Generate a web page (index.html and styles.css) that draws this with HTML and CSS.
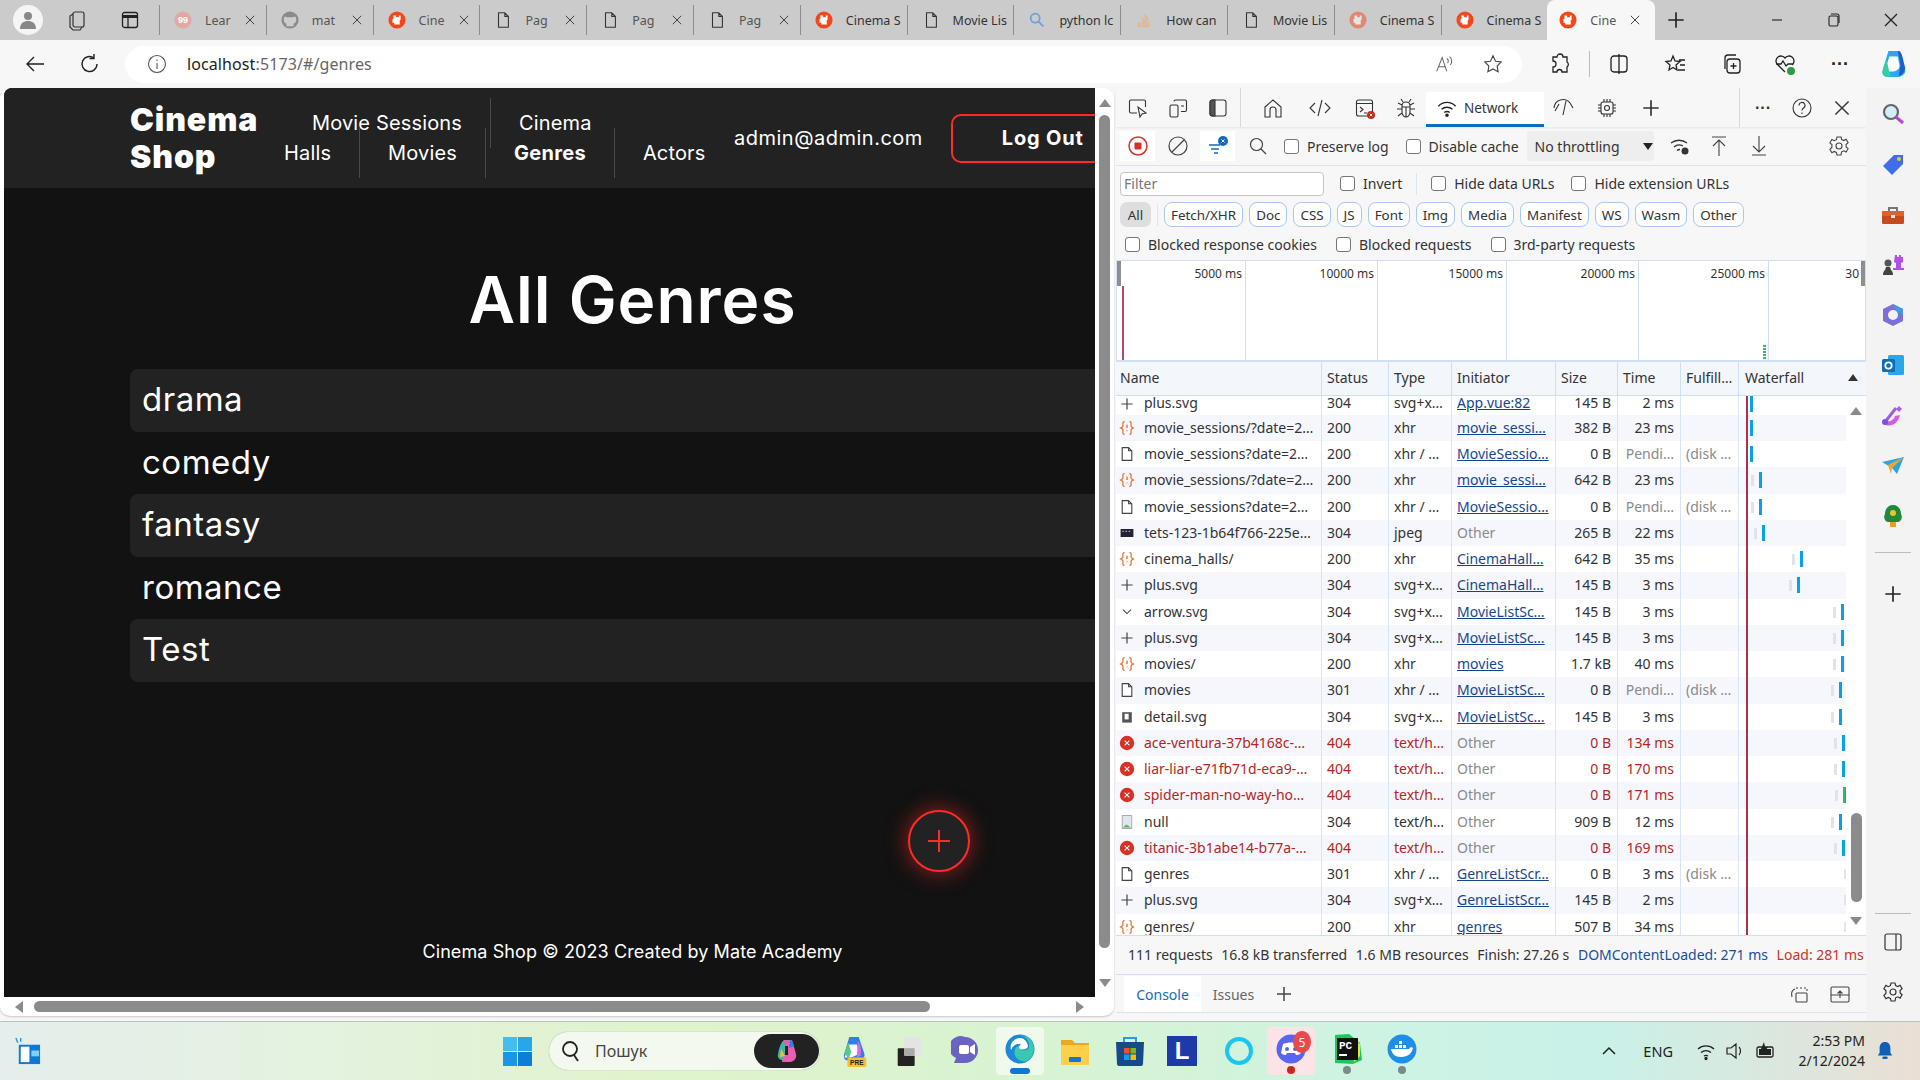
FILE: index.html
```html
<!DOCTYPE html>
<html lang="en">

<head>
  <meta charset="UTF-8" />
  <title>Cinema Shop</title>
  <link rel="stylesheet" href="styles.css">
</head>

<body>
  <svg class="sprite" xmlns="http://www.w3.org/2000/svg">
    <symbol id="i-doc" viewBox="0 0 20 20"><path d="M4 2h8l4 4v12H4z M12 2v4h4" fill="#fff" stroke="currentColor" stroke-width="1.4" stroke-linejoin="round"/></symbol>
    <symbol id="i-plus" viewBox="0 0 20 20"><path d="M10 3v14M3 10h14" fill="none" stroke="currentColor" stroke-width="1.5"/></symbol>
    <symbol id="i-xhr" viewBox="0 0 20 20"><path d="M7 2C4 2 5 5 5 7S4 9 2 10c2 1 3 1 3 3s-1 5 2 5M13 2c3 0 2 3 2 5s1 2 3 3c-2 1-3 1-3 3s1 5-2 5" fill="none" stroke="#e8743b" stroke-width="1.6"/><path d="M10 6v4M10 13v1" stroke="#e8743b" stroke-width="1.8"/></symbol>
    <symbol id="i-err" viewBox="0 0 20 20"><circle cx="10" cy="10" r="9" fill="#d93025"/><path d="M7 7l6 6M13 7l-6 6" stroke="#fff" stroke-width="1.3"/></symbol>
    <symbol id="i-close" viewBox="0 0 20 20"><path d="M4 4l12 12M16 4L4 16" fill="none" stroke="currentColor" stroke-width="1.3"/></symbol>
    <symbol id="i-page" viewBox="0 0 20 20"><path d="M5 2h7l4 4v12H5z M12 2v4h4" fill="none" stroke="currentColor" stroke-width="1.2" stroke-linejoin="round"/></symbol>
    <symbol id="i-cinema" viewBox="0 0 20 20"><circle cx="10" cy="10" r="9.5" fill="#f4471c"/><path d="M6 5h3v2h3V5h2v5h-1v5H7v-2H5V9h1z" fill="#fff"/></symbol>
  </svg>

  <div class="tabstrip">
    <div class="strip-icon profile"><svg width="24" height="24" viewBox="0 0 24 24"><circle cx="12" cy="8" r="4" fill="#888"/><path d="M4 21c0-6 4-8 8-8s8 2 8 8z" fill="#888"/></svg></div>
    <div class="strip-icon wsp"><svg width="22" height="22" viewBox="0 0 22 22" fill="none" stroke="#333" stroke-width="1.2"><rect x="7" y="3" width="11" height="15" rx="2"/><path d="M7 5L4 7v11l3 3h7l2-3"/></svg></div>
    <div class="strip-icon vert"><svg width="20" height="20" viewBox="0 0 20 20" fill="none" stroke="#222" stroke-width="1.3"><rect x="2.5" y="2.5" width="15" height="15" rx="2"/><path d="M2.5 6.5h15" stroke-width="3"/><path d="M8 7v10" /></svg></div>

    <div class="tab"><svg class="fav" viewBox="0 0 20 20"><circle cx="10" cy="10" r="9.5" fill="#e0a9a3"/><text x="10" y="13.5" class="fav-num">99</text></svg><span class="tab-title short">Lear</span><svg class="tab-x"><use href="#i-close"/></svg></div>
    <div class="tab"><svg class="fav" viewBox="0 0 20 20"><circle cx="10" cy="10" r="9.5" fill="#8a8a8a"/><path d="M6 17v-3c-2 0-3-2-3-5l1-3 3 1h6l3-1 1 3c0 3-1 5-3 5v3z" fill="#ccc"/></svg><span class="tab-title short">mat</span><svg class="tab-x"><use href="#i-close"/></svg></div>
    <div class="tab"><svg class="fav"><use href="#i-cinema"/></svg><span class="tab-title short">Cine</span><svg class="tab-x"><use href="#i-close"/></svg></div>
    <div class="tab"><svg class="fav"><use href="#i-page"/></svg><span class="tab-title short">Pag</span><svg class="tab-x"><use href="#i-close"/></svg></div>
    <div class="tab"><svg class="fav"><use href="#i-page"/></svg><span class="tab-title short">Pag</span><svg class="tab-x"><use href="#i-close"/></svg></div>
    <div class="tab"><svg class="fav"><use href="#i-page"/></svg><span class="tab-title short">Pag</span><svg class="tab-x"><use href="#i-close"/></svg></div>
    <div class="tab"><svg class="fav"><use href="#i-cinema"/></svg><span class="tab-title">Cinema S</span></div>
    <div class="tab"><svg class="fav"><use href="#i-page"/></svg><span class="tab-title">Movie Lis</span></div>
    <div class="tab"><svg class="fav" viewBox="0 0 20 20" fill="none" stroke="#6aa0dd" stroke-width="2"><circle cx="8" cy="8" r="5"/><path d="M12 12l5 5"/></svg><span class="tab-title">python lc</span></div>
    <div class="tab"><svg class="fav" viewBox="0 0 20 20" fill="none" stroke="#e3b48a" stroke-width="1.6"><path d="M4 12v5h11v-5M6.5 14.5h6M7 11.5l6 1M8 8l5.5 3M10.5 4.5l4 5"/></svg><span class="tab-title">How can</span></div>
    <div class="tab"><svg class="fav"><use href="#i-page"/></svg><span class="tab-title">Movie Lis</span></div>
    <div class="tab faded"><svg class="fav"><use href="#i-cinema"/></svg><span class="tab-title">Cinema S</span></div>
    <div class="tab"><svg class="fav"><use href="#i-cinema"/></svg><span class="tab-title">Cinema S</span></div>
    <div class="tab active"><svg class="fav"><use href="#i-cinema"/></svg><span class="tab-title short">Cine</span><svg class="tab-x"><use href="#i-close"/></svg></div>
    <svg class="new-tab"><use href="#i-plus"/></svg>

    <div class="win-btns">
      <svg class="win-btn" viewBox="0 0 20 20"><path d="M5 10h10" stroke="#222" stroke-width="1.1"/></svg>
      <svg class="win-btn" viewBox="0 0 20 20" fill="none" stroke="#222" stroke-width="1.1"><rect x="5" y="6" width="9" height="10" rx="1.5"/><path d="M7 4h6a2 2 0 0 1 2 2v7"/></svg>
      <svg class="win-btn"><use href="#i-close"/></svg>
    </div>
  </div>

  <div class="toolbar">
    <svg class="tb-icon back" viewBox="0 0 24 24" fill="none" stroke="#222" stroke-width="1.4"><path d="M21 12H4M11 5l-7 7 7 7"/></svg>
    <svg class="tb-icon reload" viewBox="0 0 24 24" fill="none" stroke="#222" stroke-width="1.4"><path d="M19 12a7.5 7.5 0 1 1-3-6M16 2v4.5h-4.5"/></svg>
    <div class="addressbar">
      <svg class="info" viewBox="0 0 20 20" fill="none" stroke="#555" stroke-width="1.1"><circle cx="10" cy="10" r="8.5"/><path d="M10 9v6M10 5.5V7"/></svg>
      <span class="url"><b>localhost</b>:5173/#/genres</span>
      <span class="url-spacer"></span>
      <svg class="bar-icon read" viewBox="0 0 24 24" fill="none" stroke="#666" stroke-width="1.1"><path d="M4 20L10 5l5 15M6 15h8M15 6c2 1 2 3 1 5M18 4c3 2 3 6 1 9"/></svg>
      <svg class="bar-icon star" viewBox="0 0 24 24" fill="none" stroke="#444" stroke-width="1.2"><path d="M12 3l2.8 6 6.2.8-4.5 4.4 1.1 6.3L12 17.4l-5.600 3.100 1.100-6.300L3 9.800 9.200 9z"/></svg>
    </div>
    <svg class="tb-icon ext" viewBox="0 0 24 24" fill="none" stroke="#222" stroke-width="1.3"><path d="M9 5a3 3 0 0 1 6 0h4v5a3 3 0 0 1 0 5v5h-5a2.5 2.5 0 0 0-5 0H5v-5a3 3 0 0 0 0-6V5z"/></svg>
    <span class="tb-sep"></span>
    <svg class="tb-icon split" viewBox="0 0 24 24" fill="none" stroke="#222" stroke-width="1.3"><rect x="4" y="4" width="16" height="16" rx="3"/><path d="M12 2v20"/></svg>
    <svg class="tb-icon favs" viewBox="0 0 24 24" fill="none" stroke="#222" stroke-width="1.3"><path d="M10 4l2 5 5 .5-4 3.5 1 5-4-2.5L6 18l1-5-4-3.5L8 9zM16 8h6M17 13h5M15 18h7"/></svg>
    <svg class="tb-icon coll" viewBox="0 0 24 24" fill="none" stroke="#222" stroke-width="1.3"><rect x="8" y="7" width="13" height="14" rx="3"/><path d="M6 17V6a3 3 0 0 1 3-3h8M14.5 11v6M11.5 14h6"/></svg>
    <svg class="tb-icon health" viewBox="0 0 24 24" fill="none" stroke="#222" stroke-width="1.3"><path d="M12 20L4 12a5 5 0 0 1 8-6 5 5 0 0 1 8 6l-1 1M3 12h5l2-3 3 5 2-2h5"/><circle cx="18" cy="19" r="4" fill="#2e9b46" stroke="none"/></svg>
    <span class="dots tb-dots">···</span>
    <svg class="tb-icon copilot" viewBox="0 0 28 32"><path d="M8 2h12l6 20c1 4-3 8-8 8H7C3 30 0 26 2 22z" fill="#2aa8e8"/><path d="M9 8h9l2 10c0 3-3 6-7 6H4z" fill="#fff"/><path d="M18 2c3 0 4 2 5 6l3 12c0 4-3 8-7 9l2-12z" fill="#1d5fd0"/><path d="M6 12c-3 5-5 12-3 16 2 2 5 2 8 1-3-5-3-11-5-17z" fill="#35cfa2"/></svg>
  </div>

  <div class="workspace">
    <div class="browser-card">
      <div class="viewport">
        <div class="site">
          <header class="site-header">
            <a class="logo">Cinema<br>Shop</a>
            <nav class="site-nav"><a class="first">Movie Sessions</a><a>Cinema<br>Halls</a><a>Movies</a><a class="current">Genres</a><a>Actors</a></nav>
            <span class="user">admin@admin.com</span>
            <button class="logout">Log Out</button>
          </header>
          <main class="genres">
            <h1>All Genres</h1>
            <ul class="genre-list">
              <li>drama</li>
              <li>comedy</li>
              <li>fantasy</li>
              <li>romance</li>
              <li>Test</li>
            </ul>
          </main>
          <footer class="site-footer">Cinema Shop © 2023 Created by Mate Academy</footer>
          <button class="add-btn"><svg width="24" height="24" viewBox="0 0 24 24"><path d="M12 1v22M1 12h22" stroke="#ff2a2a" stroke-width="2"/></svg></button>
        </div>
        <div class="page-vscroll">
          <span class="arrow-up"></span>
          <span class="page-vthumb"></span>
          <span class="arrow-down"></span>
        </div>
      </div>
      <div class="page-hscroll">
        <span class="arrow-left"></span>
        <span class="page-hthumb"></span>
        <span class="arrow-right"></span>
      </div>
    </div>

    <section class="devtools">
      <div class="dt-tabs">
        <svg class="dt-icon" viewBox="0 0 22 22" fill="none" stroke="#333" stroke-width="1.1"><path d="M10 16H4a1.5 1.5 0 0 1-1.5-1.5v-10A1.5 1.5 0 0 1 4 3h13a1.5 1.5 0 0 1 1.5 1.5V10"/><path d="M11 10l2 10 2-3 4-1z"/></svg>
        <svg class="dt-icon" viewBox="0 0 22 22" fill="none" stroke="#333" stroke-width="1.1"><rect x="3" y="8" width="8" height="12" rx="1.5"/><path d="M7 4.5A1.5 1.5 0 0 1 8.5 3H18a1.5 1.5 0 0 1 1.5 1.5V13a1.5 1.5 0 0 1-1.5 1.5h-4M14 9h3"/></svg>
        <svg class="dt-icon sep-after" viewBox="0 0 22 22" fill="none" stroke="#333" stroke-width="1.1"><rect x="3" y="3" width="16" height="16" rx="2.5"/><path d="M3 5.5A2.5 2.5 0 0 1 5.5 3H8v16H5.5A2.5 2.5 0 0 1 3 16.5z" fill="#555"/></svg>
        <span class="dt-vsep left-sep"></span>
        <svg class="dt-icon wide first-wide" viewBox="0 0 22 22" fill="none" stroke="#333" stroke-width="1.1"><path d="M3 10l8-7 8 7v10h-5v-7a3 3 0 0 0-6 0v7H3z"/></svg>
        <svg class="dt-icon wide" viewBox="0 0 22 22" fill="none" stroke="#333" stroke-width="1.1"><path d="M6 6l-5 5 5 5M16 6l5 5-5 5M13 3l-4 16"/></svg>
        <svg class="dt-icon mid" viewBox="0 0 22 22" fill="none" stroke="#333" stroke-width="1.1"><rect x="2.5" y="3" width="16" height="16" rx="2"/><path d="M2.5 6.5h16M6 10l3 2.5L6 15M10 16h3"/><circle cx="17" cy="18" r="4" fill="#c42b1c" stroke="none"/><path d="M15.8 16.8l2.4 2.4M18.2 16.8l-2.4 2.4" stroke="#fff" stroke-width=".9"/></svg>
        <svg class="dt-icon" viewBox="0 0 22 22" fill="none" stroke="#333" stroke-width="1.1"><path d="M7 9c0-3 2-4 4-4s4 1 4 4v6c0 3-2 5-4 5s-4-2-4-5zM7 10h8M11 10v10M8 5L6 2M14 5l2-3M7 12H2M15 12h5M7 8L3 6M15 8l4-2M7 16l-4 3M15 16l4 3"/></svg>
        <div class="dt-tab-active">
          <svg width="20" height="20" viewBox="0 0 22 22" fill="none" stroke="#222" stroke-width="1.5"><path d="M1.5 9a13 13 0 0 1 19 0M5 12.5a9 9 0 0 1 12 0M8 16a5 5 0 0 1 6 0"/><circle cx="11" cy="19" r="1.2" fill="#222"/></svg>
          <span>Network</span>
        </div>
        <svg class="dt-icon after-tab" viewBox="0 0 22 22" fill="none" stroke="#333" stroke-width="1.1"><path d="M2 11a9 9 0 0 1 16-5l3 5M11 18l3-14M7 7l-4 7"/></svg>
        <svg class="dt-icon gap4" viewBox="0 0 22 22" fill="none" stroke="#333" stroke-width="1.1"><rect x="5" y="5" width="12" height="12" rx="2"/><circle cx="11" cy="11" r="2.5"/><path d="M8 2v3M11 2v3M14 2v3M8 17v3M11 17v3M14 17v3M2 8h3M2 11h3M2 14h3M17 8h3M17 11h3M17 14h3"/></svg>
        <svg class="dt-icon gap4"><use href="#i-plus"/></svg>
        <span class="dt-spacer"></span>
        <span class="dt-vsep right-sep"></span>
        <span class="dots dt-dots">···</span>
        <svg class="dt-icon" viewBox="0 0 22 22" fill="none" stroke="#333" stroke-width="1.1"><circle cx="11" cy="11" r="9"/><path d="M8 8.5a3 3 0 1 1 4.5 2.5c-1 .6-1.5 1-1.5 2.5M11 15.5V17"/></svg>
        <svg class="dt-icon"><use href="#i-close"/></svg>
      </div>

      <div class="dt-controls">
        <span class="ctl-btn lit"><svg width="22" height="22" viewBox="0 0 22 22"><circle cx="11" cy="11" r="9" fill="none" stroke="#d93025" stroke-width="1.5"/><rect x="7.5" y="7.5" width="7" height="7" rx="1" fill="#d93025"/></svg></span>
        <span class="ctl-btn gap6"><svg width="22" height="22" viewBox="0 0 22 22" fill="none" stroke="#444" stroke-width="1.2"><circle cx="11" cy="11" r="9"/><path d="M5 17L17 5"/></svg></span>
        <span class="ctl-btn lit gap6"><svg width="24" height="24" viewBox="0 0 24 24"><path d="M3 11h11M5 15h8M8 19h4" stroke="#0f6cbd" stroke-width="1.5"/><circle cx="17" cy="7" r="5" fill="#0f6cbd"/><path d="M15.5 5.5l3 3M18.5 5.5l-3 3" stroke="#fff" stroke-width="1"/></svg></span>
        <span class="ctl-btn gap6"><svg width="20" height="20" viewBox="0 0 20 20" fill="none" stroke="#444" stroke-width="1.2"><circle cx="8.5" cy="8.5" r="6"/><path d="M13 13l5 5"/></svg></span>
        <label class="check first-check"><input type="checkbox">Preserve log</label>
        <label class="check"><input type="checkbox">Disable cache</label>
        <span class="throttle">No throttling<i class="tri"></i></span>
        <svg class="ctl-icon wifi-gear" viewBox="0 0 22 22" fill="none" stroke="#333" stroke-width="1.3"><path d="M2 8a13 13 0 0 1 16 0M5 12a8 8 0 0 1 9-1M8 15.5a4 4 0 0 1 3-1"/><circle cx="16" cy="16" r="3.5" fill="#333" stroke="none"/></svg>
        <svg class="ctl-icon up" viewBox="0 0 22 22" fill="none" stroke="#444" stroke-width="1.1"><path d="M4 2h14M11 21V5M5 11l6-6 6 6"/></svg>
        <svg class="ctl-icon down" viewBox="0 0 22 22" fill="none" stroke="#444" stroke-width="1.1"><path d="M4 20h14M11 1v16M5 11l6 6 6-6"/></svg>
        <svg class="ctl-icon gear" viewBox="0 0 22 22" fill="none" stroke="#444" stroke-width="1.1"><path d="M9 2h4l.6 2.6 2.2 1 2.3-1.300 2 3.400-2 1.800v2.400l2 1.800-2 3.400-2.300-1.300-2.200 1L13 20H9l-.6-2.600-2.200-1-2.300 1.300-2-3.400 2-1.800V9.600l-2-1.800 2-3.400 2.300 1.300 2.200-1z"/><circle cx="11" cy="11" r="3"/></svg>
      </div>

      <div class="dt-filter">
        <input class="filter-input" placeholder="Filter">
        <label class="check invert"><input type="checkbox">Invert</label>
        <span class="filter-sep"></span>
        <label class="check"><input type="checkbox">Hide data URLs</label>
        <label class="check"><input type="checkbox">Hide extension URLs</label>
      </div>

      <div class="dt-types">
        <span class="all-type">All</span>
        <span class="types-sep"></span>
        <span class="type">Fetch/XHR</span><span class="type">Doc</span><span class="type">CSS</span><span class="type">JS</span><span class="type">Font</span><span class="type">Img</span><span class="type">Media</span><span class="type">Manifest</span><span class="type">WS</span><span class="type">Wasm</span><span class="type">Other</span>
      </div>

      <div class="dt-blocked">
        <label class="check"><input type="checkbox">Blocked response cookies</label>
        <label class="check"><input type="checkbox">Blocked requests</label>
        <label class="check"><input type="checkbox">3rd-party requests</label>
      </div>

      <div class="overview">
        <span class="tick w129">5000 ms</span>
        <span class="tick w132">10000 ms</span>
        <span class="tick w129">15000 ms</span>
        <span class="tick w132">20000 ms</span>
        <span class="tick w130">25000 ms</span>
        <span class="tick rest">30</span>
        <i class="handle left"></i>
        <i class="handle right"></i>
        <i class="ov-load"></i>
        <i class="ov-dots"></i>
      </div>

      <div class="net-head">
        <span>Name</span><span>Status</span><span>Type</span><span>Initiator</span><span>Size</span><span>Time</span><span>Fulfill…</span><span class="wf-head">Waterfall<i class="sort-tri"></i></span>
      </div>

      <div class="net-body">
        <div class="rows">
          <div class="row"><span class="name"><svg class="ri"><use href="#i-plus"/></svg>plus.svg</span><span>304</span><span>svg+x…</span><span class="link">App.vue:82</span><span class="num">145 B</span><span class="num">2 ms</span><span></span><span class="wf"><i class="bar" style="margin-left:11px"></i></span></div>
          <div class="row"><span class="name"><svg class="ri"><use href="#i-xhr"/></svg>movie_sessions/?date=2…</span><span>200</span><span>xhr</span><span class="link">movie_sessi…</span><span class="num">382 B</span><span class="num">23 ms</span><span></span><span class="wf"><i class="bar" style="margin-left:11px"></i></span></div>
          <div class="row"><span class="name"><svg class="ri"><use href="#i-doc"/></svg>movie_sessions?date=2…</span><span>200</span><span>xhr / …</span><span class="link">MovieSessio…</span><span class="num">0 B</span><span class="num dim">Pendi…</span><span class="dim">(disk …</span><span class="wf"><i class="bar" style="margin-left:11px"></i></span></div>
          <div class="row"><span class="name"><svg class="ri"><use href="#i-xhr"/></svg>movie_sessions/?date=2…</span><span>200</span><span>xhr</span><span class="link">movie_sessi…</span><span class="num">642 B</span><span class="num">23 ms</span><span></span><span class="wf"><i class="bar" style="margin-left:20px"></i></span></div>
          <div class="row"><span class="name"><svg class="ri"><use href="#i-doc"/></svg>movie_sessions?date=2…</span><span>200</span><span>xhr / …</span><span class="link">MovieSessio…</span><span class="num">0 B</span><span class="num dim">Pendi…</span><span class="dim">(disk …</span><span class="wf"><i class="bar" style="margin-left:20px"></i></span></div>
          <div class="row"><span class="name"><svg class="ri" viewBox="0 0 20 20"><rect x="2" y="5" width="16" height="10" fill="#223"/><path d="M4 8h2M8 8h2M12 8h2" stroke="#8ad" stroke-width="1.5"/></svg>tets-123-1b64f766-225e…</span><span>304</span><span>jpeg</span><span class="dim">Other</span><span class="num">265 B</span><span class="num">22 ms</span><span></span><span class="wf"><i class="bar" style="margin-left:23px"></i></span></div>
          <div class="row"><span class="name"><svg class="ri"><use href="#i-xhr"/></svg>cinema_halls/</span><span>200</span><span>xhr</span><span class="link">CinemaHall…</span><span class="num">642 B</span><span class="num">35 ms</span><span></span><span class="wf"><i class="bar" style="margin-left:61px"></i></span></div>
          <div class="row"><span class="name"><svg class="ri"><use href="#i-plus"/></svg>plus.svg</span><span>304</span><span>svg+x…</span><span class="link">CinemaHall…</span><span class="num">145 B</span><span class="num">3 ms</span><span></span><span class="wf"><i class="bar" style="margin-left:58px"></i></span></div>
          <div class="row"><span class="name"><svg class="ri" viewBox="0 0 20 20"><path d="M5 7l5 5 5-5" fill="none" stroke="currentColor" stroke-width="1.3"/></svg>arrow.svg</span><span>304</span><span>svg+x…</span><span class="link">MovieListSc…</span><span class="num">145 B</span><span class="num">3 ms</span><span></span><span class="wf"><i class="bar" style="margin-left:102px"></i></span></div>
          <div class="row"><span class="name"><svg class="ri"><use href="#i-plus"/></svg>plus.svg</span><span>304</span><span>svg+x…</span><span class="link">MovieListSc…</span><span class="num">145 B</span><span class="num">3 ms</span><span></span><span class="wf"><i class="bar" style="margin-left:102px"></i></span></div>
          <div class="row"><span class="name"><svg class="ri"><use href="#i-xhr"/></svg>movies/</span><span>200</span><span>xhr</span><span class="link">movies</span><span class="num">1.7 kB</span><span class="num">40 ms</span><span></span><span class="wf"><i class="bar" style="margin-left:102px"></i></span></div>
          <div class="row"><span class="name"><svg class="ri"><use href="#i-doc"/></svg>movies</span><span>301</span><span>xhr / …</span><span class="link">MovieListSc…</span><span class="num">0 B</span><span class="num dim">Pendi…</span><span class="dim">(disk …</span><span class="wf"><i class="bar" style="margin-left:100px"></i></span></div>
          <div class="row"><span class="name"><svg class="ri" viewBox="0 0 20 20"><rect x="4" y="4" width="12" height="13" fill="#555"/><rect x="7" y="6" width="5" height="7" fill="#fff"/></svg>detail.svg</span><span>304</span><span>svg+x…</span><span class="link">MovieListSc…</span><span class="num">145 B</span><span class="num">3 ms</span><span></span><span class="wf"><i class="bar" style="margin-left:100px"></i></span></div>
          <div class="row bad"><span class="name"><svg class="ri"><use href="#i-err"/></svg>ace-ventura-37b4168c-…</span><span>404</span><span>text/h…</span><span class="dim">Other</span><span class="num">0 B</span><span class="num">134 ms</span><span></span><span class="wf"><i class="bar" style="margin-left:103px"></i></span></div>
          <div class="row bad"><span class="name"><svg class="ri"><use href="#i-err"/></svg>liar-liar-e71fb71d-eca9-…</span><span>404</span><span>text/h…</span><span class="dim">Other</span><span class="num">0 B</span><span class="num">170 ms</span><span></span><span class="wf"><i class="bar" style="margin-left:103px"></i></span></div>
          <div class="row bad"><span class="name"><svg class="ri"><use href="#i-err"/></svg>spider-man-no-way-ho…</span><span>404</span><span>text/h…</span><span class="dim">Other</span><span class="num">0 B</span><span class="num">171 ms</span><span></span><span class="wf"><i class="bar green" style="margin-left:104px"></i></span></div>
          <div class="row"><span class="name"><svg class="ri" viewBox="0 0 20 20"><rect x="4" y="2" width="12" height="16" fill="#dfe6ee" stroke="#99a" stroke-width="1"/><path d="M5 17l4-4 6 4z" fill="#5bb35b"/></svg>null</span><span>304</span><span>text/h…</span><span class="dim">Other</span><span class="num">909 B</span><span class="num">12 ms</span><span></span><span class="wf"><i class="bar" style="margin-left:100px"></i></span></div>
          <div class="row bad"><span class="name"><svg class="ri"><use href="#i-err"/></svg>titanic-3b1abe14-b77a-…</span><span>404</span><span>text/h…</span><span class="dim">Other</span><span class="num">0 B</span><span class="num">169 ms</span><span></span><span class="wf"><i class="bar" style="margin-left:103px"></i></span></div>
          <div class="row"><span class="name"><svg class="ri"><use href="#i-doc"/></svg>genres</span><span>301</span><span>xhr / …</span><span class="link">GenreListScr…</span><span class="num">0 B</span><span class="num">3 ms</span><span class="dim">(disk …</span><span class="wf"><i class="bar pale" style="margin-left:105px"></i></span></div>
          <div class="row"><span class="name"><svg class="ri"><use href="#i-plus"/></svg>plus.svg</span><span>304</span><span>svg+x…</span><span class="link">GenreListScr…</span><span class="num">145 B</span><span class="num">2 ms</span><span></span><span class="wf"><i class="bar pale" style="margin-left:105px"></i></span></div>
          <div class="row"><span class="name"><svg class="ri"><use href="#i-xhr"/></svg>genres/</span><span>200</span><span>xhr</span><span class="link">genres</span><span class="num">507 B</span><span class="num">34 ms</span><span></span><span class="wf"><i class="bar pale" style="margin-left:105px"></i></span></div>
        </div>
        <div class="net-scroll">
          <span class="arrow-up top-arrow"></span>
          <span class="net-thumb"></span>
          <span class="arrow-down"></span>
        </div>
        <i class="load-line"></i>
      </div>

      <div class="net-status">
        <span>111 requests</span><span>16.8 kB transferred</span><span>1.6 MB resources</span><span>Finish: 27.26 s</span><span class="dcl">DOMContentLoaded: 271 ms</span><span class="load">Load: 281 ms</span>
      </div>

      <div class="drawer">
        <span class="drawer-tab on">Console</span>
        <span class="drawer-tab">Issues</span>
        <svg class="drawer-plus"><use href="#i-plus"/></svg>
        <span class="dt-spacer"></span>
        <svg class="drawer-icon" viewBox="0 0 22 22" fill="none" stroke="#444" stroke-width="1.1"><rect x="8" y="10" width="11" height="9" rx="1"/><path d="M8 5h11v3" stroke-dasharray="2 2"/><path d="M7 6C4 7 3 10 4 14"/></svg>
        <svg class="drawer-icon last" viewBox="0 0 22 22" fill="none" stroke="#444" stroke-width="1.1"><rect x="2" y="4" width="18" height="15" rx="1.5"/><path d="M2 12h18M11 15V8M8.5 10.5L11 8l2.5 2.5"/></svg>
      </div>
    </section>

    <aside class="sidebar">
      <svg class="side-icon" viewBox="0 0 24 24"><circle cx="10" cy="10" r="7" fill="#d5ecfa" stroke="#666" stroke-width="2.2"/><path d="M15 15l7 6" stroke="#c03fe0" stroke-width="3"/></svg>
      <svg class="side-icon" viewBox="0 0 24 24"><path d="M2 14L13 3h9v9L11 23z" fill="#3f6fe8"/><circle cx="18" cy="7" r="2" fill="#f4c430"/></svg>
      <svg class="side-icon" viewBox="0 0 24 24"><path d="M8 8V5h8v3" fill="none" stroke="#777" stroke-width="2"/><rect x="1" y="8" width="22" height="13" rx="1.5" fill="#c8491e"/><rect x="1" y="8" width="22" height="5" fill="#e0622b"/><rect x="10" y="12" width="4" height="3" fill="#eee"/></svg>
      <svg class="side-icon" viewBox="0 0 24 24"><circle cx="7" cy="10" r="3.5" fill="#555"/><path d="M2 22c0-3 1-4 2-5l1-3h4l1 3c1 1 2 2 2 5z" fill="#444"/><path d="M14 2h2v2h2V2h2v2h2V2v7l-2 1v5h3v2h-11v-2h3v-5l-2-1z" fill="#b24fe8"/></svg>
      <svg class="side-icon" viewBox="0 0 24 24"><path d="M12 1l10 5v12l-10 5-10-5V6z" fill="#7b6fd8"/><path d="M12 1l10 5v6l-6-3z" fill="#3f9be8"/><path d="M7 12a5 5 0 1 0 10 0 5 5 0 0 0-10 0z" fill="#f4f4f4"/></svg>
      <svg class="side-icon" viewBox="0 0 24 24"><rect x="7" y="2" width="16" height="20" rx="1.5" fill="#28a8ea"/><rect x="1" y="6" width="13" height="13" rx="1.5" fill="#0f6cbd"/><circle cx="7.5" cy="12.5" r="3.2" fill="none" stroke="#fff" stroke-width="1.8"/></svg>
      <svg class="side-icon" viewBox="0 0 24 24"><path d="M3 20c6 4 14 0 16-9l-5 1c-1 4-5 6-8 5z" fill="#d05ce8"/><path d="M4 18L15 4" stroke="#9b5de8" stroke-width="3"/><circle cx="4" cy="18" r="3" fill="#7b4fe8"/><path d="M18 2l3 3-3 3-3-3z" fill="#b05ce8"/></svg>
      <svg class="side-icon" viewBox="0 0 24 24"><path d="M1 8l22-5-7 17-5-6z" fill="#2ca5e0"/><path d="M7 11l16-8-12 11-1 6z" fill="#f2a623"/></svg>
      <svg class="side-icon" viewBox="0 0 24 24"><rect x="9" y="16" width="6" height="7" fill="#e3a21a"/><path d="M12 1c5 0 8 4 8 9 2 3 0 8-3 8H7c-3 0-5-5-3-8 0-5 3-9 8-9z" fill="#1f8a3c"/><circle cx="12" cy="9" r="3" fill="#f2c12e"/></svg>
      <span class="side-sep"></span>
      <svg class="side-plus"><use href="#i-plus"/></svg>
      <span class="dt-spacer"></span>
      <span class="side-sep low"></span>
      <svg class="side-tool" viewBox="0 0 22 22" fill="none" stroke="#333" stroke-width="1.2"><rect x="3" y="3" width="16" height="16" rx="2"/><path d="M14 3v16"/></svg>
      <svg class="side-tool gear-tool" viewBox="0 0 22 22" fill="none" stroke="#333" stroke-width="1.2"><path d="M9 2h4l.6 2.6 2.2 1 2.3-1.300 2 3.400-2 1.800v2.400l2 1.800-2 3.400-2.300-1.300-2.200 1L13 20H9l-.6-2.600-2.200-1-2.300 1.300-2-3.400 2-1.800V9.600l-2-1.800 2-3.400 2.300 1.300 2.200-1z"/><circle cx="11" cy="11" r="3"/></svg>
    </aside>
  </div>

  <footer class="taskbar">
    <svg class="widgets" viewBox="0 0 30 30"><path d="M3 1l2 5M8 1v4" stroke="#2b9be0" stroke-width="1.5"/><rect x="6" y="8" width="22" height="20" fill="#0f78d4"/><rect x="8" y="10" width="9" height="16" fill="#fff"/><rect x="19" y="14" width="8" height="6" fill="#7fd0f7"/></svg>
    <svg class="start" viewBox="0 0 30 30"><rect x="0" y="0" width="14.5" height="14.5" fill="#44bdf2"/><rect x="15.5" y="0" width="14.5" height="14.5" fill="#2ba5ea"/><rect x="0" y="15.5" width="14.5" height="14.5" fill="#1b96e6"/><rect x="15.5" y="15.5" width="14.5" height="14.5" fill="#0b7fd8"/></svg>
    <div class="search-pill">
      <svg width="22" height="24" viewBox="0 0 22 24" fill="none" stroke="#222" stroke-width="1.8"><circle cx="10" cy="10" r="7"/><path d="M14 16l4 6"/></svg>
      <span class="search-text">Пошук</span>
      <span class="search-copilot"><svg width="22" height="26" viewBox="0 0 22 26"><path d="M8 2h8l4 14c1 4-2 8-6 8H6z" fill="#e85fb0"/><path d="M8 2c-3 2-5 8-6 14-1 4 2 6 5 6l3-10z" fill="#3fb5a8"/><path d="M14 2c2 0 3 2 4 6l-5 2z" fill="#2f7fe8"/><rect x="9" y="8" width="3" height="9" fill="#222"/><path d="M5 11l4 7-5 1z" fill="#f2c12e"/></svg></span>
    </div>
    <svg class="app pre-app" viewBox="0 0 30 34"><path d="M10 2h10l6 18c1 4-2 7-6 7H9C5 27 3 23 5 19z" fill="#2f7fe8"/><path d="M10 10h8l3 10-9 4H5z" fill="#fff"/><path d="M5 18l4-10 3 10-3 8z" fill="#55c88a"/><path d="M19 6c3 3 4 10 3 16l-4 2z" fill="#d96be0"/><rect x="8" y="24" width="20" height="10" rx="1.5" fill="#f2c12e"/><text x="18" y="32" class="pre">PRE</text></svg>
    <svg class="app" viewBox="0 0 30 34"><rect x="3" y="14" width="18" height="19" rx="1" fill="#222"/><rect x="10" y="2" width="18" height="20" rx="1" fill="#e4e4e4"/><rect x="10" y="14" width="11" height="8" fill="#aaa"/></svg>
    <svg class="app video" viewBox="0 0 30 30"><path d="M14 1a11 11 0 0 1 0 26H3l2-5A11 11 0 0 1 14 1z" fill="#6b63c4"/><rect x="8" y="9" width="10" height="9" rx="2" fill="#fff"/><path d="M19 11l5-3v11l-5-3z" fill="#fff"/></svg>
    <div class="app-slot on"><svg class="app" viewBox="0 0 30 30"><circle cx="15" cy="15" r="14.5" fill="#1d87d8"/><path d="M29 15C29 7 23 1 15 1 20 2 25 7 24 13c-.5 3-4 4-7 3.5-3-.8-2-4 0-5-6-1-9 5-7 10 2 5 8 7.5 13 5 4-2.3 6-7 6-12z" fill="#36c9b0"/><path d="M6 16c2-5 6-7 10-5.5-2 1-3 4 0 5 3 .5 6.5-.5 7-3.500-1-5-4-8-8-8-6 0-11 6-9 12z" fill="#fff"/></svg><i class="pip blue"></i></div>
    <svg class="app folder" viewBox="0 0 30 30"><path d="M1 4h11l3 3h14v20H1z" fill="#e8a91c"/><rect x="1" y="9" width="28" height="20" fill="#fbd14b"/><rect x="9" y="21" width="12" height="5" rx="1" fill="#0f78d4"/></svg>
    <svg class="app" viewBox="0 0 30 30"><path d="M9 6V2h12v4" fill="none" stroke="#2b9be0" stroke-width="2"/><path d="M1 6h28l-1 22a2 2 0 0 1-2 2H4a2 2 0 0 1-2-2z" fill="#154b88"/><rect x="9" y="12" width="5.5" height="5.5" fill="#f25022"/><rect x="15.5" y="12" width="5.5" height="5.5" fill="#7fba00"/><rect x="9" y="18.5" width="5.5" height="5.5" fill="#00a4ef"/><rect x="15.5" y="18.5" width="5.5" height="5.5" fill="#ffb900"/></svg>
    <span class="app-l">L</span>
    <svg class="app ring" viewBox="0 0 30 30"><circle cx="15" cy="15" r="12" fill="none" stroke="#1ac6f0" stroke-width="4"/></svg>
    <div class="app-slot pink"><svg class="app" viewBox="0 0 30 30"><circle cx="15" cy="15" r="14.5" fill="#5865f2"/><path d="M7 10c5-2 11-2 16 0l2 9c-2 2-4 2-5 2l-1-2H11l-1 2c-1 0-3 0-5-2z" fill="#fff"/><circle cx="11" cy="15" r="2" fill="#5865f2"/><circle cx="19" cy="15" r="2" fill="#5865f2"/></svg><i class="badge">5</i><i class="pip red"></i></div>
    <div class="app-slot plain"><svg class="app" viewBox="0 0 30 30"><path d="M3 1l14-1 11 9 2 17-9 4-18-1z" fill="#20c55e"/><path d="M20 4l8 6v12l-6 6z" fill="#e8e33a"/><rect x="5" y="4" width="21" height="22" fill="#111"/><text x="7" y="15" class="pc">PC</text><rect x="7" y="20" width="8" height="2" fill="#fff"/></svg><i class="pip gray"></i></div>
    <div class="app-slot plain"><svg class="app" viewBox="0 0 30 30"><circle cx="15" cy="15" r="14.5" fill="#1d8fe8"/><path d="M4 15h18c1-2 3-2 4-1-1 5-5 9-12 9-6 0-9-3-10-8z" fill="#fff"/><path d="M8 11h3v3H8zM12 11h3v3h-3zM16 11h3v3h-3zM12 7h3v3h-3z" fill="#fff"/></svg><i class="pip gray"></i></div>
    <span class="dt-spacer"></span>
    <svg class="tray chev" viewBox="0 0 20 20" fill="none" stroke="#222" stroke-width="1.5"><path d="M4 13l6-6 6 6"/></svg>
    <span class="lang">ENG</span>
    <svg class="tray" viewBox="0 0 20 20" fill="none" stroke="#222" stroke-width="1.3"><path d="M2 8a12 12 0 0 1 16 0M5 11.5a8 8 0 0 1 10 0M8 15a4 4 0 0 1 4 0"/><circle cx="10" cy="17.5" r="1" fill="#222"/></svg>
    <svg class="tray" viewBox="0 0 20 20" fill="none" stroke="#222" stroke-width="1.2"><path d="M2 7h4l5-4v14l-5-4H2zM14 6c2 2 2 6 0 8"/></svg>
    <svg class="tray batt" viewBox="0 0 20 20"><rect x="1" y="6" width="16" height="10" rx="1.5" fill="none" stroke="#222" stroke-width="1.3"/><rect x="3" y="8" width="12" height="6" fill="#222"/><path d="M8 1L5 8h3l-1 5 5-7H9z" fill="#222"/></svg>
    <div class="clock"><span>2:53 PM</span><span>2/12/2024</span></div>
    <svg class="bell" viewBox="0 0 20 22"><path d="M10 1c4 0 6 3 6 7v5l2 3H2l2-3V8c0-4 2-7 6-7z" fill="#0f5fb5"/><rect x="7" y="17" width="6" height="3" rx="1.5" fill="#0f5fb5"/></svg>
  </footer>
</body>

</html>
```

FILE: styles.css
```css
* {
  box-sizing: border-box;
}

body {
  margin: 0;
  width: 1920px;
  height: 1080px;
  overflow: hidden;
  display: flex;
  flex-direction: column;
  background-color: #f7f7f7;
  color: #222;
  font-family: 'Noto Sans', sans-serif;
}

.sprite {
  width: 0;
  height: 0;
  position: absolute;
}

/* tab strip */
.tabstrip {
  height: 40px;
  flex: none;
  display: flex;
  align-items: center;
  background-color: #cbcbcb;
}

.strip-icon {
  display: flex;
  align-items: center;
  justify-content: center;
}

.profile {
  width: 30px;
  height: 30px;
  margin-left: 13px;
  background-color: #f5f5f5;
  border-radius: 50%;
}

.wsp {
  width: 24px;
  margin-left: 22px;
}

.vert {
  width: 24px;
  margin-left: 29px;
  margin-right: 17px;
}

.tab {
  width: 106.8px;
  height: 30px;
  flex: none;
  display: flex;
  align-items: center;
  padding-left: 14px;
  border-left: 1px solid #8c8c8c;
  font-size: 12.5px;
  color: #333;
  white-space: nowrap;
}

.tab.faded .fav {
  opacity: .5;
}

.tab.active {
  height: 40px;
  width: 108px;
  border: 0;
  border-radius: 8px 8px 0 0;
  background-color: #f7f7f7;
  padding-left: 12px;
}

.fav {
  width: 18px;
  height: 18px;
  flex: none;
  margin-right: 13px;
}

.fav-num {
  font-family: 'Liberation Sans', sans-serif;
  font-size: 10px;
  font-weight: bold;
  fill: #fff;
  text-anchor: middle;
}

.tab-title {
  flex: none;
}

.tab-title.short {
  width: 32px;
  color: #555;
}

.tab-x {
  width: 14px;
  height: 14px;
  flex: none;
  margin-left: 6px;
}

.new-tab {
  width: 22px;
  height: 22px;
  margin-left: 10px;
}

.win-btns {
  margin-left: auto;
  display: flex;
  gap: 37px;
  padding-right: 19px;
}

.win-btn {
  width: 20px;
  height: 20px;
}

/* address bar row */
.toolbar {
  height: 48px;
  flex: none;
  display: flex;
  align-items: center;
  padding-left: 23px;
}

.tb-icon {
  width: 24px;
  height: 24px;
  flex: none;
}

.reload {
  margin-left: 31px;
}

.addressbar {
  width: 1397px;
  height: 37px;
  margin-left: 23px;
  display: flex;
  align-items: center;
  background-color: #fff;
  border-radius: 19px;
  padding-left: 22px;
}

.info {
  width: 20px;
  height: 20px;
}

.url {
  margin-left: 20px;
  font-size: 16px;
  color: #666;
  letter-spacing: .1px;
}

.url b {
  font-weight: normal;
  color: #222;
}

.url-spacer,
.dt-spacer {
  flex: 1;
}

.bar-icon {
  width: 22px;
  height: 22px;
}

.star {
  margin-left: 27px;
  margin-right: 18px;
}

.ext {
  margin-left: 26px;
}

.tb-sep {
  width: 1px;
  height: 26px;
  margin-left: 17px;
  background-color: #bbb;
}

.split {
  margin-left: 17px;
}

.favs,
.coll {
  margin-left: 32px;
}

.health {
  margin-left: 30px;
}

.dots {
  font-family: 'Liberation Sans', sans-serif;
  font-weight: bold;
  line-height: 1;
}

.tb-dots {
  width: 24px;
  margin-left: 31px;
  text-align: center;
  font-size: 18px;
}

.copilot {
  width: 26px;
  height: 30px;
  margin-left: 29px;
}

/* main area */
.workspace {
  height: 933px;
  flex: none;
  display: flex;
}

.browser-card {
  width: 1114px;
  height: 928px;
  flex: none;
  padding-left: 4px;
  background-color: #fff;
  border-radius: 10px;
  overflow: hidden;
  box-shadow: 0 1px 2px rgba(0, 0, 0, .2);
}

.viewport {
  height: 909px;
  display: flex;
}

.site {
  width: 1091px;
  height: 909px;
  flex: none;
  position: relative;
  display: flex;
  flex-direction: column;
  background-color: #121212;
  border-top-left-radius: 8px;
  color: #fff;
  font-family: Inter, sans-serif;
  overflow: hidden;
}

.site-header {
  height: 100px;
  flex: none;
  display: flex;
  align-items: center;
  padding-left: 126px;
  background-color: #222;
}

.logo {
  width: 154px;
  flex: none;
  font-size: 32px;
  font-weight: 900;
  line-height: 37px;
  letter-spacing: .9px;
}

.site-nav {
  width: 450px;
  flex: none;
  font-size: 20px;
  line-height: 30px;
  letter-spacing: .15px;
  white-space: nowrap;
}

.site-nav a {
  padding: 13px 28px;
  border-left: 1px solid #4a4a4a;
}

.site-nav a.first {
  border-left: 0;
}

.site-nav a.current {
  font-weight: 700;
  letter-spacing: .3px;
}

.user {
  flex: none;
  font-size: 20px;
  letter-spacing: .5px;
}

.logout {
  width: 200px;
  height: 49px;
  flex: none;
  margin-left: 28px;
  padding: 0 0 0 49px;
  text-align: left;
  background: transparent;
  color: #fff;
  border: 2px solid #ff2a2a;
  border-radius: 10px;
  font-family: Inter, sans-serif;
  font-size: 20px;
  font-weight: 700;
  letter-spacing: .8px;
}

.genres {
  flex: 1;
  width: 1005px;
  margin-left: 126px;
}

h1 {
  margin: 0;
  padding-top: 75px;
  height: 181px;
  text-align: center;
  font-size: 64px;
  font-weight: 600;
  line-height: 74px;
  letter-spacing: 1px;
}

.genre-list {
  list-style: none;
  margin: 0;
  padding: 0;
}

.genre-list li {
  height: 62.5px;
  padding-left: 12px;
  font-size: 33px;
  line-height: 61px;
  letter-spacing: .5px;
  border-radius: 8px;
}

.genre-list li:nth-child(odd) {
  background-color: #222;
}

.site-footer {
  height: 56px;
  text-align: center;
  width: 1005px;
  margin-left: 126px;
  font-size: 18px;
  letter-spacing: .1px;
}

.add-btn {
  position: absolute;
  left: 904px;
  top: 722px;
  width: 62px;
  height: 62px;
  display: flex;
  align-items: center;
  justify-content: center;
  padding: 0;
  background-color: #222;
  border: 2px solid #ff2a2a;
  border-radius: 50%;
  box-shadow: 0 0 22px rgba(255, 42, 42, .6);
}

.page-vscroll {
  width: 19px;
  display: flex;
  flex-direction: column;
  align-items: center;
}

.page-vthumb {
  width: 11px;
  height: 833px;
  margin-top: 8px;
  background-color: #8b8b8b;
  border-radius: 6px;
}

.arrow-up,
.arrow-down,
.arrow-left,
.arrow-right {
  width: 0;
  height: 0;
  flex: none;
  border-style: solid;
  border-color: transparent;
}

.arrow-up {
  margin-top: 11px;
  border-width: 0 6px 8px;
  border-bottom-color: #8b8b8b;
}

.arrow-down {
  margin-top: 31px;
  border-width: 8px 6px 0;
  border-top-color: #8b8b8b;
}

.page-hscroll {
  height: 19px;
  display: flex;
  align-items: center;
}

.arrow-left {
  margin-left: 11px;
  border-width: 6px 8px 6px 0;
  border-right-color: #8b8b8b;
}

.page-hthumb {
  width: 896px;
  height: 11px;
  margin-left: 11px;
  background-color: #8b8b8b;
  border-radius: 6px;
}

.arrow-right {
  margin-left: 146px;
  border-width: 6px 0 6px 8px;
  border-left-color: #8b8b8b;
}

/* devtools */
.devtools {
  width: 750px;
  flex: none;
  margin-left: 2px;
  height: 925px;
  display: flex;
  flex-direction: column;
  font-size: 14px;
  color: #333;
  border-bottom: 1px solid #e2e2e2;
}

.dt-tabs {
  height: 39px;
  flex: none;
  display: flex;
  align-items: center;
  padding: 0 4px 0 2px;
  box-shadow: 0 1px 2px rgba(0, 0, 0, .08);
}

.dt-icon {
  width: 22px;
  height: 22px;
  flex: none;
  margin: 0 9px;
}

.sep-after {
  margin-right: 0;
}

.dt-vsep {
  width: 1px;
  height: 39px;
  flex: none;
  background-color: #d8d8d8;
}

.left-sep {
  margin-left: 11px;
}

.right-sep {
  margin-right: 11px;
}

.first-wide {
  margin-left: 21px;
}

.wide {
  margin-right: 12px;
}

.dt-icon.wide + .dt-icon.wide {
  margin-left: 13px;
}

.dt-icon.mid {
  margin-left: 11px;
  margin-right: 10px;
}

.dt-tab-active {
  width: 118px;
  height: 35px;
  margin-top: 3px;
  flex: none;
  display: flex;
  align-items: center;
  gap: 7px;
  padding-left: 11px;
  background-color: #fff;
  border-bottom: 3px solid #0f6cbd;
  font-size: 13.5px;
}

.after-tab {
  margin-left: 8px;
}

.gap4 {
  margin-left: 13px;
}

.dt-dots {
  width: 24px;
  margin-right: 7px;
  font-size: 16px;
  text-align: center;
}

.dt-controls {
  height: 39px;
  flex: none;
  display: flex;
  align-items: center;
  padding-left: 4px;
  border-bottom: 1px solid #d6e4f5;
}

.ctl-btn {
  width: 35px;
  height: 30px;
  flex: none;
  display: flex;
  align-items: center;
  justify-content: center;
}

.ctl-btn.lit {
  background-color: #fff;
}

.ctl-btn.gap6 {
  margin-left: 5px;
}

.check {
  display: flex;
  align-items: center;
  white-space: nowrap;
}

.check input {
  appearance: none;
  width: 15px;
  height: 15px;
  margin: 0 8px 0 0;
  background-color: #fff;
  border: 1px solid #767676;
  border-radius: 3px;
}

.first-check {
  margin-left: 9px;
  margin-right: 17px;
}

.throttle {
  width: 127px;
  height: 30px;
  margin-left: 8px;
  display: flex;
  align-items: center;
  justify-content: space-between;
  padding: 0 1px 0 8px;
  background-color: #eee;
  border-radius: 3px;
}

.tri {
  width: 0;
  height: 0;
  border-style: solid;
  border-color: #222 transparent transparent;
  border-width: 7px 5.5px 0;
}

.ctl-icon {
  width: 22px;
  height: 22px;
  flex: none;
}

.wifi-gear {
  margin-left: 15px;
}

.up {
  margin-left: 17px;
}

.down {
  margin-left: 18px;
}

.gear {
  margin-left: 58px;
}

.dt-filter {
  height: 35px;
  flex: none;
  display: flex;
  align-items: center;
  padding-left: 4px;
}

.filter-input {
  width: 204px;
  height: 24px;
  padding: 0 3px;
  border: 1px solid #c4c4c4;
  border-radius: 4px;
  font-family: 'Noto Sans', sans-serif;
  font-size: 14px;
}

.invert {
  margin-left: 16px;
}

.filter-sep {
  width: 1px;
  height: 22px;
  margin: 0 14px;
  background-color: #dbe6f5;
}

.filter-sep + .check {
  margin-right: 17px;
}

.dt-types {
  height: 27px;
  flex: none;
  display: flex;
  align-items: center;
  gap: 6px;
  padding-left: 4px;
  font-size: 13.4px;
}

.all-type {
  width: 31px;
  height: 25px;
  display: flex;
  align-items: center;
  justify-content: center;
  background-color: #dedede;
  border-radius: 7px;
}

.types-sep {
  width: 1px;
  height: 22px;
  background-color: #dbe6f5;
}

.type {
  height: 25px;
  padding: 0 6px;
  display: flex;
  align-items: center;
  border: 1px solid #a9c8f0;
  border-radius: 8px;
  background-color: #fff;
}

.dt-blocked {
  height: 32px;
  flex: none;
  display: flex;
  align-items: center;
  gap: 19px;
  padding-left: 9px;
}

.overview {
  height: 102px;
  flex: none;
  position: relative;
  display: flex;
  background-color: #fff;
  border: 1px solid #cfdff5;
  border-width: 1px 1px 2px;
  font-size: 12px;
}

.tick {
  height: 100%;
  padding: 4px 3px 0 0;
  text-align: right;
  border-right: 1px solid #cfdff5;
}

.w129 {
  width: 129px;
}

.w130 {
  width: 130px;
}

.w132 {
  width: 132px;
}

.rest {
  flex: 1;
  border-right: 0;
  padding-right: 6px;
}

.handle {
  position: absolute;
  top: 0;
  width: 4px;
  height: 25px;
  background-color: #8e8e8e;
}

.handle.left {
  left: 0;
}

.handle.right {
  right: 0;
}

.ov-load {
  position: absolute;
  left: 5px;
  top: 25px;
  bottom: 0;
  width: 2px;
  background-color: #b5475a;
}

.ov-dots {
  position: absolute;
  left: 646px;
  top: 84px;
  width: 3px;
  height: 15px;
  background: repeating-linear-gradient(#36b85c 0 2px, transparent 2px 3px);
}

.net-head {
  height: 34px;
  flex: none;
  display: grid;
  grid-template-columns: 206px 67px 63px 104px 62px 63px 58px 1fr;
  background-color: #f3f6fb;
  border-bottom: 1px solid #cfdff5;
}

.net-head > span {
  display: flex;
  align-items: center;
  padding: 0 0 2px 5px;
  border-right: 1px solid #cfdff5;
}

.net-head > span:first-child {
  padding-left: 4px;
}

.net-head > .wf-head {
  justify-content: space-between;
  padding: 0 8px 2px 6px;
  border-right: 0;
}

.sort-tri {
  width: 0;
  height: 0;
  border-style: solid;
  border-color: transparent transparent #333;
  border-width: 0 5px 7px;
}

.net-body {
  height: 539px;
  flex: none;
  position: relative;
  display: flex;
  overflow: hidden;
  background-color: #fff;
}

.rows {
  width: 730px;
  flex: none;
}

.row {
  height: 26.25px;
  display: grid;
  grid-template-columns: 206px 67px 63px 104px 62px 63px 58px 1fr;
  line-height: 26px;
  white-space: nowrap;
}

/* the list is scrolled: only the lower part of the first row shows */
.row:first-child {
  height: 18.75px;
  line-height: 14px;
}

.row:first-child > span {
  overflow: visible;
}

.row:first-child > span.name,
.row:first-child > .wf {
  align-items: flex-start;
}

.row:nth-child(even) {
  background-color: #f5f7fc;
}

.row > span {
  padding-left: 5px;
  border-right: 1px solid #d8e5f7;
  overflow: hidden;
}

.row > span.name {
  display: flex;
  align-items: center;
  padding-left: 0;
}

.ri {
  width: 16px;
  height: 16px;
  flex: none;
  margin: 0 9px 0 3px;
  color: #444;
}

.row .num {
  padding: 0 6px 0 0;
  text-align: right;
}

.row .link {
  color: #15468c;
  text-decoration: underline;
}

.row .dim {
  color: #8a8a8a;
}

.row.bad span {
  color: #b3261e;
}

.row.bad span.dim {
  color: #8a8a8a;
}

.row > .wf {
  padding: 0;
  border-right: 0;
  display: flex;
  align-items: center;
}

.bar {
  position: relative;
  width: 3px;
  height: 16px;
  flex: none;
  background-color: #0aa0e8;
}

.row:nth-child(n+4) .bar:not(.pale)::before {
  content: '';
  position: absolute;
  left: -8px;
  top: 3px;
  width: 3px;
  height: 11px;
  background-color: #e0e4e8;
}

.bar.green {
  background: linear-gradient(90deg, #2dbb6a 50%, #0aa0e8 50%);
}

.bar.pale {
  width: 2px;
  height: 10px;
  background-color: #e2e6ea;
}

.net-scroll {
  flex: 1;
  display: flex;
  flex-direction: column;
  align-items: center;
}

.net-scroll .top-arrow {
  margin-top: 11px;
}

.net-thumb {
  width: 11px;
  height: 89px;
  margin-top: 398px;
  background-color: #8b8b8b;
  border-radius: 6px;
}

.net-scroll .arrow-down {
  margin-top: 15px;
}

.load-line {
  position: absolute;
  left: 630px;
  top: 0;
  bottom: 0;
  width: 2px;
  background-color: #a8324a;
}

.net-status {
  height: 40px;
  flex: none;
  display: flex;
  align-items: center;
  gap: 8.6px;
  padding: 0 0 1px 12px;
  border-top: 1px solid #cfdff5;
  border-bottom: 1px solid #cfdff5;
  white-space: nowrap;
}

.dcl {
  color: #1a4d9c;
}

.load {
  color: #c5362b;
}

.drawer {
  height: 37px;
  flex: none;
  display: flex;
  align-items: center;
  padding: 1px 0 0 8px;
}

.drawer-tab {
  width: 77px;
  height: 36px;
  display: flex;
  align-items: center;
  justify-content: center;
  color: #666;
}

.drawer-tab.on {
  background-color: #fff;
  color: #0f6cbd;
  margin-right: -6px;
}

.drawer-plus {
  width: 20px;
  height: 20px;
  margin-left: 2px;
  color: #444;
}

.drawer-icon {
  width: 22px;
  height: 22px;
  margin-right: 19px;
}

.drawer-icon.last {
  margin-right: 15px;
}

/* right sidebar */
.sidebar {
  width: 54px;
  flex: none;
  display: flex;
  flex-direction: column;
  align-items: center;
  padding-top: 14px;
  background-color: #f3f3f3;
}

.side-icon {
  width: 24px;
  height: 24px;
  margin-bottom: 26.25px;
  flex: none;
}

.side-sep {
  width: 36px;
  height: 1px;
  margin-top: -2px;
  background-color: #bbb;
}

.side-sep.low {
  margin-top: 0;
  margin-bottom: 17px;
}

.side-plus {
  width: 22px;
  height: 22px;
  margin-top: 30px;
}

.side-tool {
  width: 22px;
  height: 22px;
  flex: none;
}

.gear-tool {
  margin-top: 28px;
  margin-bottom: 18px;
}

/* taskbar */
.taskbar {
  height: 59px;
  flex: none;
  display: flex;
  align-items: center;
  padding-left: 13px;
  border-top: 1px solid #b8c4bc;
  background: linear-gradient(90deg, #e4eeec 0, #e4f2e0 300px, #e0f3cc 650px, #d9f3d0 1000px, #cdf3e4 1400px, #c9f1e8 1600px, #eadfd5 1920px);
}

.widgets {
  width: 29px;
  height: 29px;
  flex: none;
}

.start {
  width: 29px;
  height: 29px;
  flex: none;
  margin-left: 461px;
}

.search-pill {
  width: 271px;
  height: 38px;
  flex: none;
  margin-left: 17px;
  display: flex;
  align-items: center;
  padding: 0 1px 0 11px;
  background-color: #f3f9ee;
  border-radius: 19px;
  box-shadow: 0 0 1px rgba(0, 0, 0, .4);
}

.search-text {
  margin-left: 13px;
  font-size: 16px;
  color: #444;
}

.search-copilot {
  width: 65px;
  height: 34px;
  margin-left: auto;
  display: flex;
  align-items: center;
  justify-content: center;
  background-color: #222;
  border-radius: 17px;
}

.app {
  width: 30px;
  height: 32px;
  flex: none;
  margin-left: 25px;
}

.pre-app {
  margin-left: 19px;
}

.app.video {
  margin-left: 27px;
}

.pre {
  font-family: 'Liberation Sans', sans-serif;
  font-size: 7px;
  font-weight: bold;
  text-anchor: middle;
  fill: #222;
}

.pc {
  font-family: 'Liberation Mono', monospace;
  font-size: 11px;
  font-weight: bold;
  fill: #fff;
}

.app-slot {
  width: 48px;
  height: 48px;
  flex: none;
  position: relative;
  display: flex;
  align-items: center;
  justify-content: center;
  margin-left: 7px;
  border-radius: 4px;
}

.app-slot .app {
  margin: 0 0 5px;
}

.app-slot.on {
  margin-left: 15px;
  background-color: rgba(255, 255, 255, .6);
}

.app-slot.pink {
  margin-left: 13px;
  background-color: #fbe3e6;
}

.app-slot.pink + .plain {
  margin-left: 8px;
}

.app.folder {
  margin-left: 16px;
}

.app-l {
  width: 30px;
  height: 30px;
  flex: none;
  margin-left: 22px;
  display: flex;
  align-items: center;
  justify-content: center;
  background-color: #1e3aa8;
  color: #fff;
  font-family: 'Liberation Sans', sans-serif;
  font-size: 24px;
  font-weight: bold;
}

.app.ring {
  margin-left: 27px;
}

.pip {
  position: absolute;
  left: 50%;
  bottom: 1px;
  width: 8px;
  height: 8px;
  margin-left: -4px;
  border-radius: 50%;
}

.pip.blue {
  width: 20px;
  height: 6px;
  margin-left: -10px;
  border-radius: 3px;
  background-color: #0f78d4;
}

.pip.red {
  background-color: #c42b1c;
}

.pip.gray {
  background-color: #7a8a86;
}

.badge {
  position: absolute;
  right: 4px;
  top: 4px;
  width: 18px;
  height: 22px;
  display: flex;
  align-items: center;
  justify-content: center;
  background-color: #e8494d;
  color: #fff;
  border-radius: 50%;
  font-size: 12px;
  font-style: normal;
}

.tray {
  width: 20px;
  height: 20px;
  flex: none;
  margin-left: 9px;
}

.tray.batt {
  margin-left: 11px;
}

.lang {
  margin: 0 14px 0 24px;
  font-size: 14.5px;
}

.clock {
  width: 89px;
  display: flex;
  flex-direction: column;
  align-items: flex-end;
  font-size: 14px;
  line-height: 20px;
}

.bell {
  width: 18px;
  height: 22px;
  flex: none;
  margin: 0 26px 0 11px;
}
```
